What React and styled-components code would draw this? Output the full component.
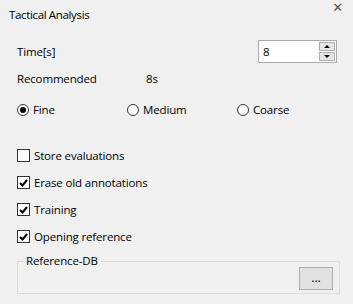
import styled, { createGlobalStyle } from "styled-components";

const GlobalStyle = createGlobalStyle`
  html, body {
    margin: 0;
    padding: 0;
    background: #f0f0f0;
  }
`;

const Window = styled.div`
  width: 353px;
  height: 304px;
  background: #f0f0f0;
  font-family: "Open Sans", "Noto Sans", sans-serif;
  font-size: 11.5px;
  letter-spacing: -0.15px;
  color: #000;
  display: flex;
  flex-direction: column;
  box-sizing: border-box;
  overflow: hidden;
`;

const TitleBar = styled.div`
  height: 30px;
  display: flex;
  justify-content: space-between;
  align-items: flex-start;
  padding: 0 10px 0 9px;
`;

const Title = styled.div`
  margin-top: 7px;
  line-height: 16px;
  letter-spacing: -0.35px;
`;

const Close = styled.div`
  margin-top: 1px;
  font-size: 13px;
  line-height: 13px;
  color: #555;
  font-family: "DejaVu Sans", sans-serif;
`;

const Content = styled.div`
  display: flex;
  flex-direction: column;
  padding: 10px 13px 0 17px;
`;

const Row = styled.div`
  height: ${(p) => p.$h || 23}px;
  margin-top: ${(p) => p.$mt || 0}px;
  display: flex;
  align-items: center;
  justify-content: ${(p) => (p.$spread ? "space-between" : "flex-start")};
`;

const Label = styled.span`
  width: ${(p) => (p.$w ? `${p.$w}px` : "auto")};
  white-space: nowrap;
`;

const Spin = styled.div`
  width: 79px;
  height: 23px;
  box-sizing: border-box;
  border: 1px solid #acacac;
  background: #fff;
  margin-right: 3px;
  display: flex;
  align-items: stretch;
`;

const SpinValue = styled.div`
  flex: 1;
  padding-left: 4px;
  display: flex;
  align-items: center;
`;

const SpinButtons = styled.div`
  width: 16px;
  padding: 1px 1px 1px 0;
  display: flex;
  flex-direction: column;
  gap: 1px;
`;

const SpinButton = styled.div`
  flex: 1;
  border: 1px solid #adadad;
  background: #e5e5e5;
  display: flex;
  align-items: center;
  justify-content: center;
`;

const Triangle = styled.div`
  width: 0;
  height: 0;
  border-left: 3px solid transparent;
  border-right: 3px solid transparent;
  ${(p) =>
    p.$up
      ? "border-bottom: 3px solid #000;"
      : "border-top: 3px solid #000;"}
`;

const RadioItem = styled.label`
  display: flex;
  align-items: center;
  gap: 4px;
  width: ${(p) => p.$w}px;
`;

const RadioCircle = styled.span`
  width: 12px;
  height: 12px;
  box-sizing: border-box;
  border-radius: 50%;
  border: 1px solid #333;
  background: #fff;
  display: flex;
  align-items: center;
  justify-content: center;
  &::after {
    content: "";
    width: 6px;
    height: 6px;
    border-radius: 50%;
    background: ${(p) => (p.$on ? "#000" : "transparent")};
  }
`;

const CheckItem = styled.label`
  height: 27px;
  display: flex;
  align-items: center;
  gap: 4px;
`;

const Box = styled.span`
  width: 13px;
  height: 13px;
  box-sizing: border-box;
  border: 1px solid #333;
  background: #fff;
  display: flex;
  align-items: center;
  justify-content: center;
`;

const Group = styled.fieldset`
  margin: 5px 0 0 0;
  padding: 0 6px 3px 6px;
  border: 1px solid #dcdcdc;
  display: flex;
  justify-content: flex-end;
`;

const Legend = styled.legend`
  padding: 0 2px;
  line-height: 12px;
`;

const Button = styled.button`
  width: 34px;
  height: 23px;
  box-sizing: border-box;
  border: 1px solid #adadad;
  background: #e1e1e1;
  font-family: inherit;
  font-size: 12px;
  padding: 0 0 3px 0;
  color: #000;
`;

function Check({ on }) {
  return (
    <Box>
      {on && (
        <svg width="9" height="8" viewBox="0 0 9 8">
          <path d="M1 4 L3.5 6.5 L8 1" fill="none" stroke="#000" strokeWidth="2" />
        </svg>
      )}
    </Box>
  );
}

export default function App() {
  const checks = [
    { label: "Store evaluations", on: false },
    { label: "Erase old annotations", on: true },
    { label: "Training", on: true },
    { label: "Opening reference", on: true },
  ];

  return (
    <Window>
      <GlobalStyle />
      <TitleBar>
        <Title>Tactical Analysis</Title>
        <Close>✕</Close>
      </TitleBar>

      <Content>
        <Row $spread>
          <Label>Time[s]</Label>
          <Spin>
            <SpinValue>8</SpinValue>
            <SpinButtons>
              <SpinButton>
                <Triangle $up />
              </SpinButton>
              <SpinButton>
                <Triangle />
              </SpinButton>
            </SpinButtons>
          </Spin>
        </Row>

        <Row $mt={4}>
          <Label $w={129}>Recommended</Label>
          <Label>8s</Label>
        </Row>

        <Row $mt={8}>
          <RadioItem $w={110}>
            <RadioCircle $on />
            Fine
          </RadioItem>
          <RadioItem $w={110}>
            <RadioCircle />
            Medium
          </RadioItem>
          <RadioItem $w={100}>
            <RadioCircle />
            Coarse
          </RadioItem>
        </Row>

        <Row $h={21} />

        {checks.map((c) => (
          <CheckItem key={c.label}>
            <Check on={c.on} />
            {c.label}
          </CheckItem>
        ))}

        <Group>
          <Legend>Reference-DB</Legend>
          <Button>...</Button>
        </Group>
      </Content>
    </Window>
  );
}
